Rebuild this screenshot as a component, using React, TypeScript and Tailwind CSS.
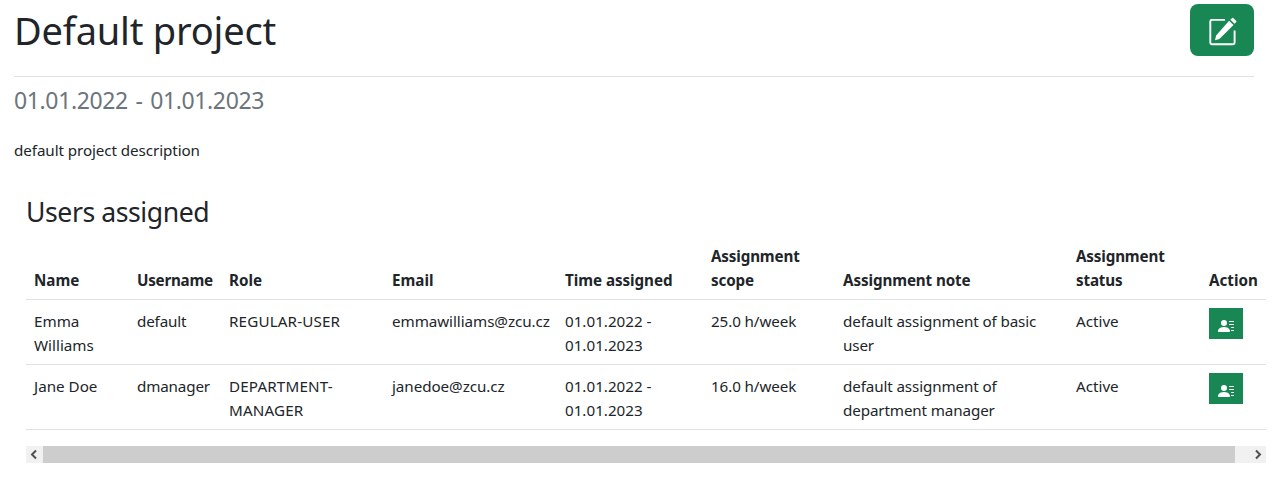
import { BsPersonLinesFill } from "react-icons/bs";

const columns = [
  { label: "Name", width: "w-[103px]", tracking: "" },
  { label: "Username", width: "w-[92px]", tracking: "tracking-[-0.25px]" },
  { label: "Role", width: "w-[163px]", tracking: "" },
  { label: "Email", width: "w-[173px]", tracking: "" },
  { label: "Time assigned", width: "w-[146px]", tracking: "tracking-[-0.05px]" },
  { label: "Assignment\nscope", width: "w-[132px]", tracking: "tracking-[-0.15px]" },
  { label: "Assignment note", width: "w-[233px]", tracking: "tracking-[-0.1px]" },
  { label: "Assignment\nstatus", width: "w-[133px]", tracking: "tracking-[-0.15px]" },
  { label: "Action", width: "w-[65px]", tracking: "" },
];

const cellTracking = [
  "",
  "tracking-[-0.15px]",
  "tracking-[0.15px]",
  "tracking-[-0.06px]",
  "",
  "tracking-[-0.1px]",
  "tracking-[-0.12px]",
  "",
];

const rows = [
  ["Emma\nWilliams", "default", "REGULAR-USER", "emmawilliams@zcu.cz", "01.01.2022 -\n01.01.2023", "25.0 h/week", "default assignment of basic\nuser", "Active"],
  ["Jane Doe", "dmanager", "DEPARTMENT-\nMANAGER", "janedoe@zcu.cz", "01.01.2022 -\n01.01.2023", "16.0 h/week", "default assignment of\ndepartment manager", "Active"],
];

function EditIcon() {
  return (
    <svg className="size-8" viewBox="0 0 32 32" fill="none">
      <path
        d="M19 5.9H5.8Q4.3 5.9 4.3 7.4V28.8Q4.3 30.3 5.8 30.3H27.1Q28.6 30.3 28.6 28.8V16.5"
        stroke="currentColor"
        strokeWidth="1.9"
      />
      <path
        d="M9 26.2L10.1 21.5L23.1 6.8L27.5 11L13.4 25ZM24.4 5.7L26.2 4Q26.7 3.6 27.2 4L30.3 7Q30.7 7.5 30.3 8L28.6 9.8Z"
        fill="currentColor"
      />
    </svg>
  );
}

function Arrow({ d }: { d: string }) {
  return (
    <svg className="h-[17px] w-[17px]" viewBox="0 0 17 17" fill="none">
      <path d={d} stroke="#505050" strokeWidth="2" />
    </svg>
  );
}

export default function App() {
  return (
    <main className="h-[479px] w-[1281px] overflow-hidden bg-white font-['Noto_Sans','Open_Sans',sans-serif] text-[15.2px] leading-6 text-[#212529]">
      <header className="ml-[14px] mr-[27px] flex h-[77px] items-start justify-between border-b border-[#dee2e6] pt-1">
        <h1 className="mt-[2px] text-[38px] leading-[48px] tracking-[-0.2px]">Default project</h1>
        <button className="flex h-[52px] w-16 items-center justify-center rounded-lg bg-[#198754] text-white">
          <EditIcon />
        </button>
      </header>
      <h2 className="ml-[14px] mt-2 text-[23px] leading-[30px] tracking-[-0.37px] text-[#6c757d] [word-spacing:2px]">01.01.2022 - 01.01.2023</h2>
      <p className="ml-[14px] mt-[23px] tracking-[-0.08px]">default project description</p>
      <section className="ml-[26px] w-[1240px]">
        <h3 className="mt-[33px] text-[26.6px] leading-[34px] tracking-[-0.43px]">Users assigned</h3>
        <table className="mt-2 w-full table-fixed border-collapse text-left">
          <thead>
            <tr className="h-[62px] border-b border-[#dee2e6]">
              {columns.map((c) => (
                <th key={c.label} className={`${c.width} ${c.tracking} whitespace-pre pb-[7px] pl-2 align-bottom font-bold`}>{c.label}</th>
              ))}
            </tr>
          </thead>
          <tbody>
            {rows.map((r) => (
              <tr key={r[1]} className="h-[65px] border-b border-[#dee2e6]">
                {r.map((t, i) => (
                  <td key={i} className={`${cellTracking[i]} whitespace-pre pb-[7px] pl-2 pt-[9px] align-top`}>{t}</td>
                ))}
                <td className="pl-2 pt-2 align-top">
                  <button className="flex h-[31px] w-[34px] items-center justify-center bg-[#198754] pt-[5px] text-white">
                    <BsPersonLinesFill className="size-4" />
                  </button>
                </td>
              </tr>
            ))}
          </tbody>
        </table>
        <div className="mt-4 flex h-[17px] bg-[#f1f1f1]">
          <Arrow d="M10 4.5L6 8.5L10 12.5" />
          <div className="h-full w-[1192px] bg-[#cdcdcd]" />
          <div className="flex flex-1 justify-end">
            <Arrow d="M7 4.5L11 8.5L7 12.5" />
          </div>
        </div>
      </section>
    </main>
  );
}
